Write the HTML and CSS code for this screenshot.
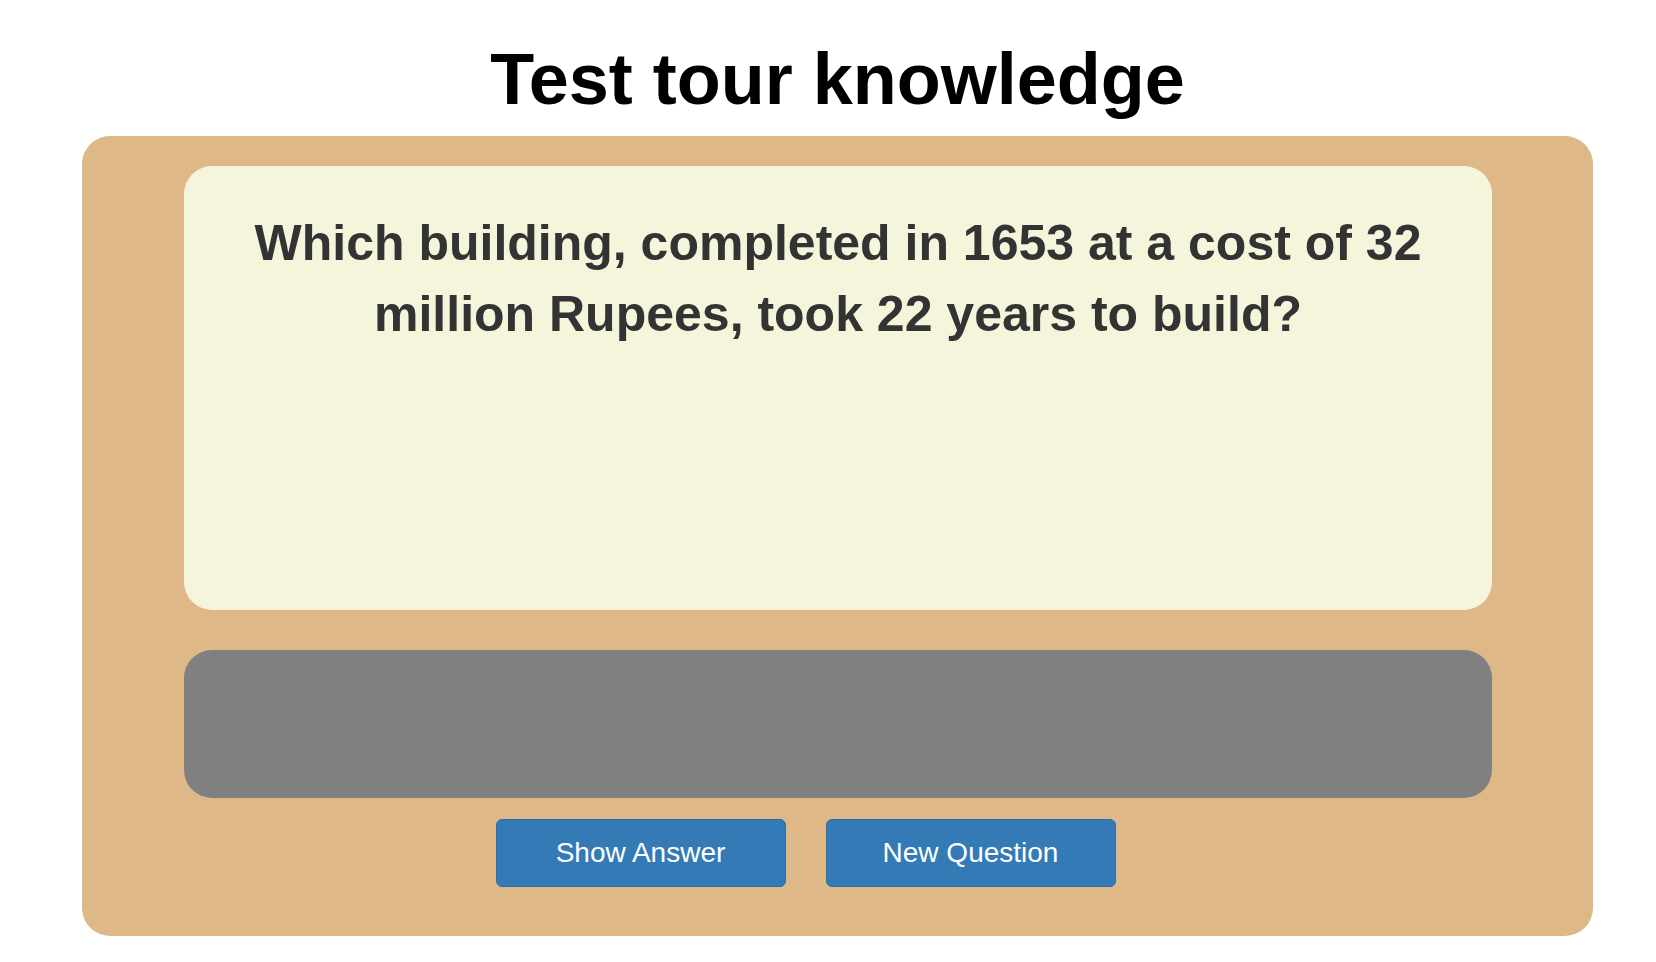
FILE: index.html
```html
<!DOCTYPE html>
<html lang="en">
<head>
<meta charset="utf-8">
<title>Test tour knowledge</title>
<link rel="stylesheet" href="styles.css">
</head>
<body>
  <h1 class="title">Test tour knowledge</h1>
  <div class="board">
    <div class="question-card">
      <p class="question">Which building, completed in 1653 at a cost of 32 million Rupees, took 22 years to build?</p>
    </div>
    <div class="answer-card"></div>
    <div class="actions">
      <button class="btn">Show Answer</button>
      <button class="btn">New Question</button>
    </div>
  </div>
</body>
</html>
```

FILE: styles.css
```css
html, body {
  margin: 0;
  padding: 0;
  background: #ffffff;
}

body {
  font-family: "Liberation Sans", Arial, Helvetica, sans-serif;
  color: #333333;
}

.title {
  margin: 40px 0 17px 82px;
  width: 1511px;
  text-align: center;
  font-size: 72px;
  line-height: 79px;
  font-weight: bold;
  color: #000000;
}

.board {
  margin-left: 82px;
  width: 1511px;
  height: 800px;
  box-sizing: border-box;
  background: #deb887;
  border-radius: 28px;
  padding: 30px 101px 0 102px;
  display: flex;
  flex-direction: column;
}

.question-card {
  height: 444px;
  box-sizing: border-box;
  background: #f5f5dc;
  border-radius: 28px;
  padding: 42px 60px 0;
}

.question {
  margin: 0;
  text-align: center;
  font-size: 50px;
  line-height: 1.42857;
  font-weight: bold;
  color: #333333;
}

.answer-card {
  margin-top: 40px;
  height: 148px;
  background: #808080;
  border-radius: 28px;
}

.actions {
  margin-top: 21px;
  display: flex;
  justify-content: center;
  gap: 40px;
  padding-right: 65px;
}

.btn {
  width: 290px;
  height: 68px;
  box-sizing: border-box;
  background: #337ab7;
  border: 1px solid #2e6da4;
  border-radius: 6px;
  color: #ffffff;
  font-family: "Liberation Sans", Arial, Helvetica, sans-serif;
  font-size: 28px;
  line-height: 1;
  padding: 0 0 0 0;
  display: flex;
  align-items: center;
  justify-content: center;
}
```
